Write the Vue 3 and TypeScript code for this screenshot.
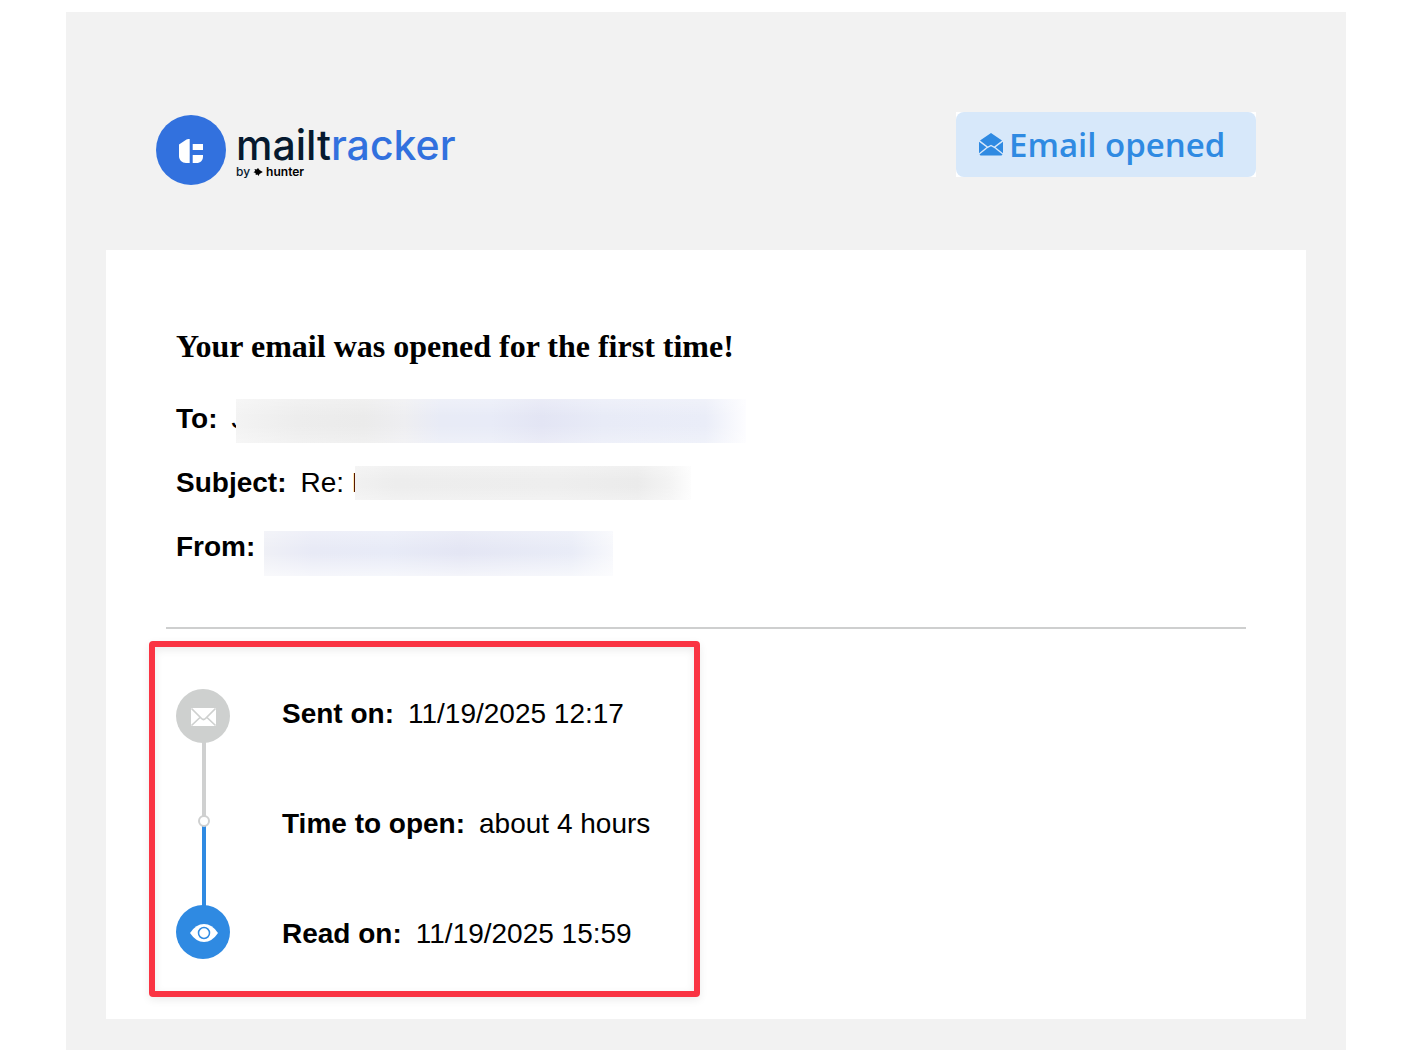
<script setup lang="ts">
interface Entry {
  label: string
  value: string
  mask: string
}

const details: Entry[] = [
  { label: 'To:', value: 'J', mask: 'mask-to' },
  { label: 'Subject:', value: 'Re: K', mask: 'mask-subject' },
  { label: 'From:', value: '', mask: 'mask-from' },
]

const events = [
  { label: 'Sent on:', value: '11/19/2025 12:17' },
  { label: 'Time to open:', value: 'about 4 hours' },
  { label: 'Read on:', value: '11/19/2025 15:59' },
]
</script>

<template>
  <div class="page">
    <main class="mail">
      <header class="header">
        <div class="brand">
          <svg class="brand-mark" viewBox="0 0 70 70" aria-hidden="true">
            <circle cx="35" cy="35" r="35" fill="#3271de" />
            <path fill="#fff" d="M33.700 24v24H30c-4 0-7-3-7-7V29.500l7.500-5q.8-.5 1.800-.5Z" />
            <path fill="#fff" d="M36.700 29H47v6H36.700ZM36.700 40H47v1.500c0 4-2.500 6.500-6.500 6.500h-3.800Z" />
          </svg>
          <div class="brand-text">
            <div class="brand-name">mailt<span>racker</span></div>
            <div class="brand-by">
              <span class="by">by</span>
              <svg class="hunter-mark" viewBox="0 0 10 10" aria-hidden="true">
                <path d="M5 1 3.500 2.500 1.500 2 2.200 4 .5 5.300 2.500 6l.3 2L4.500 7.500 5.500 9l1-2L9.800 5 6.500 3Z" />
              </svg>
              <b>hunter</b>
            </div>
          </div>
        </div>
        <div class="badge-corner">
          <div class="badge">
            <svg class="badge-icon" viewBox="0 0 24 24" aria-hidden="true">
              <g fill="#2f8ae2">
                <path d="M12 0 23 7.600 15.200 13.500 12 11.800 8.800 13.500 1 7.600Z" />
                <path d="M0 8.800 7.400 14.300 0 20.300ZM24 8.800 16.600 14.300 24 20.300Z" />
                <path d="M12 13.200 15.600 15.300 23.500 21.500 22.500 22.500H1.500L.5 21.500 8.400 15.300Z" />
              </g>
            </svg>
            <span>Email opened</span>
          </div>
        </div>
      </header>

      <section class="card">
        <h1>Your email was opened for the first time!</h1>
        <dl class="details">
          <div v-for="d in details" :key="d.label" class="row">
            <dt>{{ d.label }}</dt>
            <dd>
              <span v-if="d.value">{{ d.value }}</span>
              <i class="mask" :class="d.mask"></i>
            </dd>
          </div>
        </dl>
        <hr />
        <div class="timeline">
          <svg class="track" viewBox="0 0 54 270" aria-hidden="true">
            <path d="M28 50v78" stroke="#cfd0d0" stroke-width="4" />
            <path d="M28 137v85" stroke="#2f8ae2" stroke-width="4" />
            <circle cx="27" cy="27" r="27" fill="#ced0cf" />
            <rect x="15" y="19" width="25" height="18" rx="1" fill="#fff" />
            <path
              d="M15.500 19.500 25.500 29.500q2 2 4 0l10-10M15.500 36.500l8.500-8M39.500 36.500l-8.500-8"
              fill="none"
              stroke="#ced0cf"
              stroke-width="1.700"
            />
            <circle cx="28" cy="132" r="5" fill="#fff" stroke="#cfd0d0" stroke-width="2" />
            <circle cx="27" cy="243" r="27" fill="#2f8ae2" />
            <path d="M14 244q6-9 14-9t14 9q-6 9-14 9t-14-9Z" fill="#fff" />
            <circle cx="28" cy="244" r="5.500" fill="#fff" stroke="#2f8ae2" stroke-width="1.500" />
          </svg>
          <dl class="events">
            <div v-for="e in events" :key="e.label" class="event">
              <dt>{{ e.label }}</dt>
              <dd>{{ e.value }}</dd>
            </div>
          </dl>
        </div>
      </section>
    </main>
  </div>
</template>

<style>
body {
  margin: 0;
  background: #fff;
}
</style>

<style scoped>
.page {
  box-sizing: border-box;
  display: flex;
  min-height: 100vh;
  padding: 12px 66px 0;
  color: #000;
  font-family: "Liberation Sans", Arial, sans-serif;
  font-size: 28px;
}
.mail {
  box-sizing: border-box;
  flex: 1;
  padding: 100px 40px 31px;
  background: #f2f2f2;
}
.header {
  display: flex;
  justify-content: space-between;
  align-items: flex-start;
  padding: 0 50px 65px;
}
.brand {
  display: flex;
  gap: 10px;
  padding-top: 3px;
}
.brand-mark {
  width: 70px;
  height: 70px;
}
.brand-text {
  padding-top: 9px;
  font-family: Inter, sans-serif;
  color: #061a2f;
}
.brand-name {
  font-size: 41px;
  font-weight: 500;
  line-height: 42px;
}
.brand-name span {
  color: #3271de;
}
.brand-by {
  display: flex;
  align-items: center;
  gap: 3px;
  font-size: 12px;
  line-height: 12px;
}
.brand-by .by {
  font-weight: 500;
}
.brand-by b {
  color: #000;
  font-weight: 600;
}
.hunter-mark {
  width: 10px;
  height: 10px;
}
.badge-corner {
  background: #fff;
}
.badge {
  box-sizing: border-box;
  display: flex;
  align-items: center;
  gap: 6px;
  min-width: 300px;
  height: 65px;
  padding: 0 23px;
  border-radius: 8px;
  background: #d7e8fa;
  color: #2f8ae2;
  font-family: "Open Sans", "Noto Sans", sans-serif;
  font-size: 33px;
  font-weight: 600;
  line-height: 65px;
  white-space: nowrap;
}
.badge-icon {
  width: 24px;
  height: 24px;
}
.card {
  padding: 78px 60px 22px;
  background: #fff;
}
h1 {
  margin: 0 10px 22px;
  font-family: "Liberation Serif", "Times New Roman", serif;
  font-size: 32px;
  line-height: 37px;
}
dl,
dd {
  margin: 0;
}
dt {
  font-weight: 700;
}
.details {
  padding: 0 10px;
}
.row {
  display: flex;
  gap: 14px;
  height: 64px;
  line-height: 64px;
}
.row dd {
  display: flex;
}
.mask {
  position: relative;
}
.mask-to {
  width: 510px;
  height: 44px;
  margin: 12px 0 0 -9px;
  background:
    linear-gradient(#fff4, #fff0 40%, #fff0 60%, #fff4),
    linear-gradient(90deg, #f3f3f3, #ededed 12%, #ebebeb 25%, #eeeef1 33%, #e8ebf6 40%, #e8ebf7 50%, #e3e5f4 60%, #e8ebf7 72%, #eaedf8 92%, #fdfdff);
}
.mask-subject {
  width: 336px;
  height: 34px;
  margin: 15px 0 0 -16px;
  background:
    linear-gradient(#fff4, #fff0 40%, #fff0 60%, #fff4),
    linear-gradient(90deg, #f1f1f1, #ededed 12%, #eeeeee 60%, #ebebeb 84%, #f4f4f4 94%, #fdfdfd);
}
.mask-from {
  width: 349px;
  height: 45px;
  margin: 16px 0 0 -5px;
  background:
    linear-gradient(#fff4, #fff0 40%, #fff0 50%, #fff9),
    linear-gradient(90deg, #eff0f6, #e8eaf6 14%, #e8ebf7 36%, #e4e6f4 56%, #e9ecf7 88%, #f7f8fc);
}
hr {
  height: 2px;
  margin: 48px 0 12px;
  border: 0;
  background: #cecfcf;
}
.timeline {
  display: flex;
  gap: 52px;
  width: fit-content;
  margin-left: -17px;
  padding: 42px 44px 32px 21px;
  border: 6px solid #fa3443;
  border-radius: 4px;
  box-shadow: 0 3px 8px #00000014, inset 0 3px 8px #00000014;
}
.track {
  width: 54px;
  height: 270px;
}
.events {
  display: flex;
  flex-direction: column;
  gap: 60px;
}
.event {
  display: flex;
  gap: 14px;
  line-height: 50px;
  white-space: nowrap;
}
</style>
